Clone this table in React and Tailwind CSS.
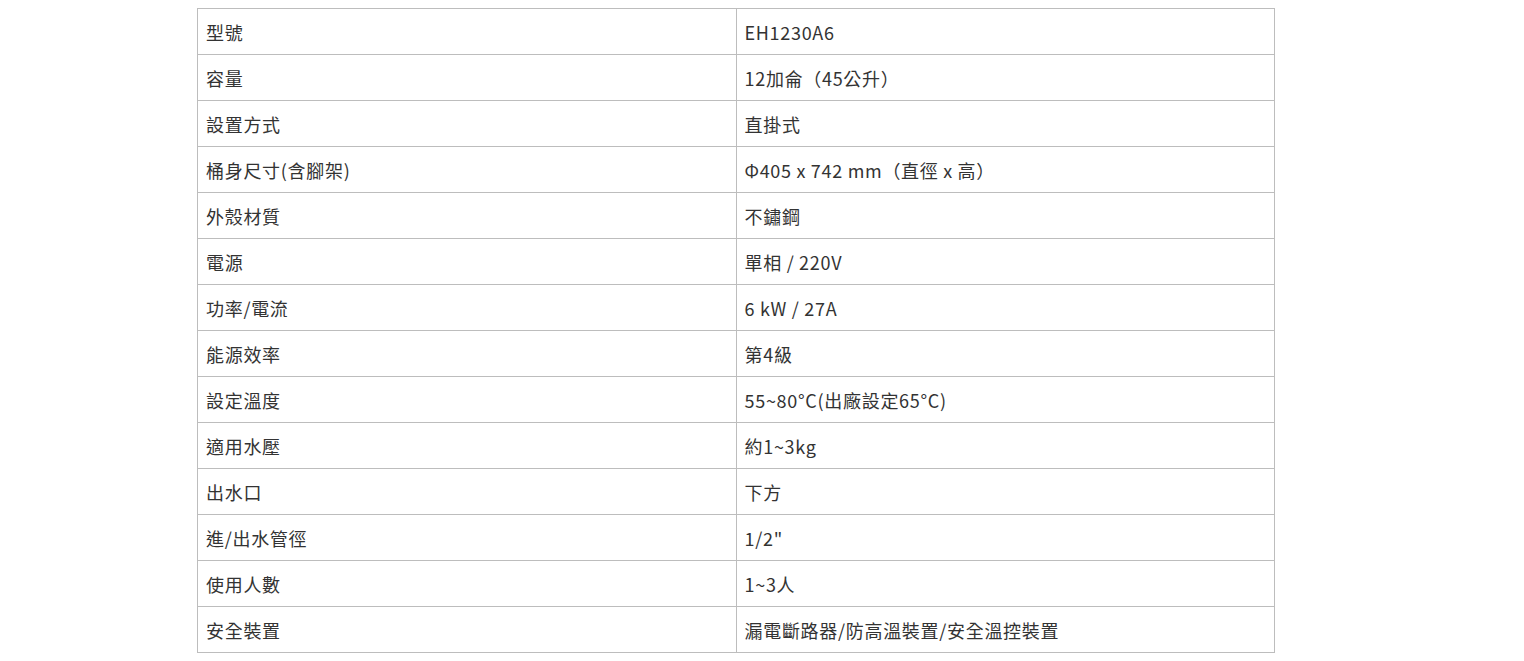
import React from 'react';

const specs = [
  ['型號', 'EH1230A6'],
  ['容量', '12加侖（45公升）'],
  ['設置方式', '直掛式'],
  ['桶身尺寸(含腳架)', 'Φ405 x 742 mm（直徑 x 高）'],
  ['外殼材質', '不鏽鋼'],
  ['電源', '單相 / 220V'],
  ['功率/電流', '6 kW / 27A'],
  ['能源效率', '第4級'],
  ['設定溫度', '55~80°C(出廠設定65°C)'],
  ['適用水壓', '約1~3kg'],
  ['出水口', '下方'],
  ['進/出水管徑', '1/2"'],
  ['使用人數', '1~3人'],
  ['安全裝置', '漏電斷路器/防高溫裝置/安全溫控裝置'],
];

export default function App() {
  return (
    <div className="min-h-screen bg-white pt-[8px] pl-[197px]" style={{ fontFamily: '"Noto Sans CJK TC", "Noto Sans", sans-serif' }}>
      <table className="w-[1078px] table-fixed border-collapse text-[18px] leading-[26px] tracking-[0.7px] text-[#333]">
        <tbody>
          {specs.map(([k, v]) => (
            <tr key={k} className="h-[46px]">
              <td className="border border-[#bdbdbd] px-[8px] py-0 align-middle">{k}</td>
              <td className="border border-[#bdbdbd] px-[8px] py-0 align-middle">{v}</td>
            </tr>
          ))}
        </tbody>
      </table>
    </div>
  );
}
